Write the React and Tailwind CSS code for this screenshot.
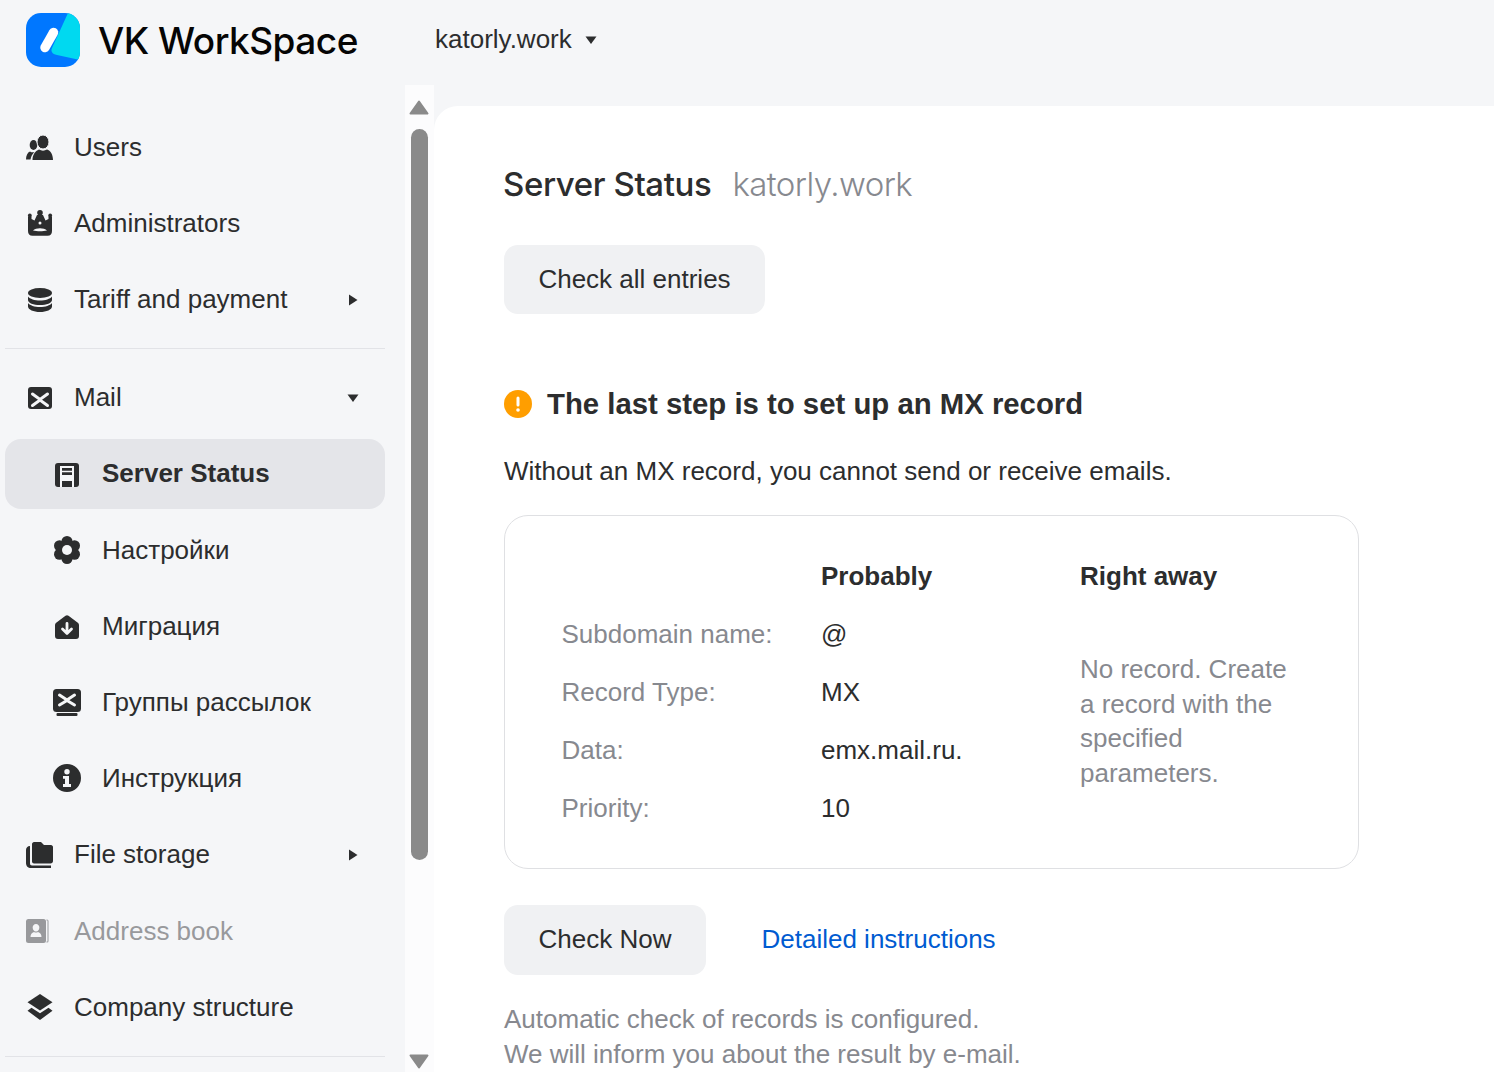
import React from "react";

const BG = "#f5f6f8";

const Icon = ({ children }) => (
  <svg width="28" height="28" viewBox="0 0 28 28" fill="currentColor" className="shrink-0">
    {children}
  </svg>
);

const icons = {
  users: (
    <Icon>
      <ellipse cx="7.500" cy="12" rx="3.800" ry="5" />
      <path d="M0 26.500c0-4 1.500-7 4-8 1.500 1 3 1 4.500.5-2 1.800-3.500 4.500-4 7.500z" />
      <ellipse cx="17" cy="9" rx="6" ry="7" stroke={BG} strokeWidth="1" />
      <path d="M6.500 27c0-5 2.500-9 6.500-10.500 2.500 1.500 5.500 1.500 8 0 3.500 1 6 5 6 10.500z" />
    </Icon>
  ),
  crown: (
    <Icon>
      <path
        fillRule="evenodd"
        d="M2 7.500h3.500V10l3 1.500L11 6h6l2.500 5.500 3-1.500V7.500H26V22c0 3-1.500 4.700-4.500 4.700h-15C3.500 26.700 2 25 2 22zM7 21.500c4 1 10 1 14 0-3-3-11-3-14 0zM14 12.500a1.500 1.500 0 1 0 0 3 1.500 1.500 0 0 0 0-3z"
      />
      <circle cx="14" cy="3.800" r="2.800" />
      <circle cx="3.800" cy="6.500" r="1.900" />
      <circle cx="24.200" cy="6.500" r="1.900" />
    </Icon>
  ),
  database: (
    <Icon>
      <ellipse cx="14" cy="8" rx="12" ry="5" />
      <path d="M2 11.500c2 2.500 6.500 4 12 4s10-1.500 12-4v3.500c0 3-5.500 5-12 5s-12-2-12-5z" />
      <path d="M2 18c2 2.500 6.500 4 12 4s10-1.500 12-4v3.500c0 3-5.500 5.500-12 5.500s-12-2.500-12-5.500z" />
    </Icon>
  ),
  mail: (
    <Icon>
      <rect x="2" y="4" width="24" height="22" rx="3" />
      <path
        d="M6.500 11 14 16.500 21.500 11M6.500 22.500 14 17l7.500 5.500"
        fill="none"
        stroke={BG}
        strokeWidth="3"
        strokeLinecap="round"
      />
    </Icon>
  ),
  server: (
    <Icon>
      <rect x="2" y="3" width="24" height="24" rx="3" />
      <path
        fillRule="evenodd"
        fill={BG}
        d="M7 6h14v21h-2v-6H9v6H7zM9 8v2.700h10V8zM9 12.300v2.700h10v-2.700z"
      />
    </Icon>
  ),
  gear: (
    <Icon>
      <circle cx="14" cy="5.500" r="5.500" />
      <circle cx="14" cy="22.500" r="5.500" />
      <circle cx="6.500" cy="9.750" r="5.500" />
      <circle cx="21.500" cy="9.750" r="5.500" />
      <circle cx="6.500" cy="18.250" r="5.500" />
      <circle cx="21.500" cy="18.250" r="5.500" />
      <circle cx="14" cy="14" r="9" />
      <circle cx="14" cy="14" r="5" fill={BG} />
    </Icon>
  ),
  migrate: (
    <Icon>
      <path d="M12.500 3.800c1-.8 2-.8 3 0l9 6.700c1 .8 1.500 1.500 1.500 2.800V24c0 2-1 3-3 3H5c-2 0-3-1-3-3V13.300c0-1.300.5-2 1.500-2.800z" />
      <path
        d="M14 11.500V21M9.500 17l4.500 4.500 4.500-4.500"
        fill="none"
        stroke={BG}
        strokeWidth="2.800"
        strokeLinecap="round"
        strokeLinejoin="round"
      />
    </Icon>
  ),
  groups: (
    <Icon>
      <rect x="0" y="1" width="28" height="23" rx="3.500" />
      <path
        d="M6.500 7 14 12l7.500-5M6.500 17 14 12.500l7.500 4.500"
        fill="none"
        stroke={BG}
        strokeWidth="3"
        strokeLinecap="round"
      />
      <rect x="3.500" y="25" width="21" height="3" rx="1" />
    </Icon>
  ),
  info: (
    <Icon>
      <path
        fillRule="evenodd"
        d="M14 0a14 14 0 1 1 0 28 14 14 0 0 1 0-28zm0 5a2.700 2.700 0 1 0 0 5.400A2.700 2.700 0 0 0 14 5zm-4 7v2.800h2v5.200h-2V23h8v-3h-2v-8z"
      />
    </Icon>
  ),
  file: (
    <Icon>
      <path d="M8 1h7l3 3h7c1 0 2 1 2 2v14c0 1.500-1 2.500-2.500 2.500H8c-1 0-2-1-2-2V3c0-1 1-2 2-2z" />
      <path d="M4 5v17.500c0 1 .7 2 2 2h19V27H5c-3 0-5-2-5-5V9c0-2 1.500-4 4-4z" />
    </Icon>
  ),
  book: (
    <Icon>
      <path
        fillRule="evenodd"
        d="M2 2h15.500A2.500 2.500 0 0 1 20 4.500v19a2.500 2.500 0 0 1-2.500 2.500H2.500A2.500 2.500 0 0 1 0 23.500V4.500A2.500 2.500 0 0 1 2 2zm8 5a3.300 3.300 0 0 0-3.300 3.800c0 2 1.300 3.700 3.300 3.700s3.300-1.700 3.300-3.700A3.300 3.300 0 0 0 10 7zM4.500 20h11c0-2.500-1.300-4.300-3.500-5-1.300.7-2.700.7-4 0-2.200.7-3.500 2.500-3.500 5z"
      />
      <path d="M20.500 2.500h.5a1.500 1.500 0 0 1 1.500 1.500v20a1.500 1.500 0 0 1-1.500 1.500h-.5v-1h1v-21h-1z" />
    </Icon>
  ),
  layers: (
    <Icon>
      <path d="M14 1 26.500 9.300 14 17.500 1.500 9.300z" />
      <path d="M5.500 14.800 14 20.300l8.500-5.500 4 3L14 27 1.500 17.800z" />
    </Icon>
  ),
};

const Caret = ({ dir }) => (
  <svg width="12" height="12" viewBox="0 0 12 12" fill="currentColor" className="ml-auto mt-px shrink-0">
    {dir === "down" ? <path d="M0.500 2.500h11L6 10z" /> : <path d="M2 0.500v11L10.500 6z" />}
  </svg>
);

const NavItem = ({ icon, label, caret, sub, active, muted, tall }) => {
  const content = (
    <div className={`flex items-center ${sub ? "gap-[21px]" : "gap-[20px]"}`}>
      {icons[icon]}
      <span className={active ? "font-bold" : ""}>{label}</span>
    </div>
  );
  return (
    <div
      className={`flex items-center ${tall ? "h-[77px]" : "h-[76px]"} ${muted ? "text-[#98999c]" : "text-[#2c2d2e]"} ${
        active ? "" : `pr-[26px] ${sub ? "pl-[48px]" : "pl-[21px]"}`
      }`}
    >
      {active ? (
        <div className="flex h-[70px] w-full items-center rounded-[16px] bg-[#e4e5e9] pl-[48px] pr-[26px]">{content}</div>
      ) : (
        <>
          {content}
          {caret && <Caret dir={caret} />}
        </>
      )}
    </div>
  );
};

const Logo = () => (
  <svg width="54" height="54" viewBox="0 0 54 54" className="shrink-0">
    <defs>
      <clipPath id="logo-clip">
        <rect width="54" height="54" rx="15" />
      </clipPath>
    </defs>
    <g clipPath="url(#logo-clip)">
      <rect width="54" height="54" fill="#0077ff" />
      <path d="M42 0h12v47l-23-5c-5-1-6.500-4-5-7z" fill="#00d9f0" />
      <path d="M27.500 19.500 19 34.500" stroke="#ffffff" strokeWidth="9.500" strokeLinecap="round" />
    </g>
  </svg>
);

const recordRows = [
  ["Subdomain name:", "@"],
  ["Record Type:", "MX"],
  ["Data:", "emx.mail.ru."],
  ["Priority:", "10"],
];

export default function App() {
  return (
    <div className="h-[1072px] overflow-hidden bg-[#f5f6f8] text-[26px] font-['Liberation_Sans',Arial,sans-serif] text-[#2c2d2e]">
      <header className="flex h-[85px] items-start">
        <div className="flex w-[435px] items-start gap-[18px] pl-[26px] pt-[13px]">
          <Logo />
          <span className="pt-[1px] font-['Inter',sans-serif] text-[37px] font-medium leading-[54px] tracking-[-0.5px] text-[#050505]">
            VK WorkSpace
          </span>
        </div>
        <div className="flex items-center gap-[13px] pt-[20px]">
          <span>katorly.work</span>
          <svg width="12" height="8" viewBox="0 0 12 8" fill="currentColor">
            <path d="M0.500 0.500h11L6 8z" />
          </svg>
        </div>
      </header>

      <div className="flex h-[987px]">
        <aside className="w-[405px] shrink-0 pl-[5px] pt-[24px]">
          <nav className="w-[380px]">
            <NavItem icon="users" label="Users" />
            <NavItem icon="crown" label="Administrators" />
            <NavItem icon="database" label="Tariff and payment" caret="right" />
            <div className="mb-[10px] mt-[11px] h-px bg-[#e2e3e7]" />
            <NavItem icon="mail" label="Mail" caret="down" />
            <NavItem icon="server" label="Server Status" sub active tall />
            <NavItem icon="gear" label="Настройки" sub />
            <NavItem icon="migrate" label="Миграция" sub />
            <NavItem icon="groups" label="Группы рассылок" sub />
            <NavItem icon="info" label="Инструкция" sub />
            <NavItem icon="file" label="File storage" caret="right" tall />
            <NavItem icon="book" label="Address book" muted />
            <NavItem icon="layers" label="Company structure" />
            <div className="mt-[11px] h-px bg-[#e2e3e7]" />
          </nav>
        </aside>

        {/* scrollbar */}
        <div className="flex w-[29px] shrink-0 flex-col items-center bg-[#fcfcfd] pr-[1px] pt-[15px]">
          <svg width="20" height="15" viewBox="0 0 20 15" fill="#8a8a8a">
            <path d="M10 1.500 18.500 13.500H1.500z" stroke="#8a8a8a" strokeWidth="2" strokeLinejoin="round" />
          </svg>
          <div className="mt-[14px] h-[731px] w-[17px] rounded-[9px] bg-[#8a8a8a]" />
          <svg className="mt-[194px]" width="20" height="15" viewBox="0 0 20 15" fill="#8a8a8a">
            <path d="M10 13.500 18.500 1.500H1.500z" stroke="#8a8a8a" strokeWidth="2" strokeLinejoin="round" />
          </svg>
        </div>

        <main className="mt-[21px] flex-1 rounded-tl-[24px] bg-white pl-[70px] pt-[57px]">
          <div className="-ml-px flex items-baseline gap-[21px] font-['Inter',sans-serif] text-[33px] leading-[42px]">
            <h1 className="font-medium tracking-[-0.4px]">Server Status</h1>
            <span className="font-light tracking-[-0.55px] text-[#87898f]">katorly.work</span>
          </div>

          <button className="mt-[40px] flex h-[69px] w-[261px] items-center justify-center rounded-[14px] bg-[#f0f1f3]">
            Check all entries
          </button>

          <div className="mt-[71px] flex items-center gap-[15px]">
            <svg width="28" height="28" viewBox="0 0 28 28">
              <circle cx="14" cy="14" r="14" fill="#ff9e00" />
              <rect x="12.500" y="6.500" width="3" height="10" rx="1.500" fill="#fff" />
              <circle cx="14" cy="20" r="1.800" fill="#fff" />
            </svg>
            <h2 className="text-[29.33px] font-bold leading-[38px]">The last step is to set up an MX record</h2>
          </div>

          <p className="mt-[30px] leading-[36px]">Without an MX record, you cannot send or receive emails.</p>

          <div className="mt-[26px] h-[354px] w-[855px] rounded-[24px] border border-[#dfe0e3] pl-[56.5px] pt-[31px]">
            <div className="grid grid-cols-[259.5px_259px_1fr] auto-rows-[58px] items-center">
              <div />
              <div className="font-bold">Probably</div>
              <div className="font-bold">Right away</div>
              {recordRows.map(([name, value], i) => (
                <React.Fragment key={name}>
                  <div className="text-[#87898f]">{name}</div>
                  <div>{value}</div>
                  {i === 0 && (
                    <div className="row-span-4 self-start pt-[47px] leading-[34.7px] text-[#87898f]">
                      No record. Create
                      <br />
                      a record with the
                      <br />
                      specified
                      <br />
                      parameters.
                    </div>
                  )}
                </React.Fragment>
              ))}
            </div>
          </div>

          <div className="mt-[36px] flex items-center gap-[55.5px]">
            <button className="flex h-[70px] w-[202px] items-center justify-center rounded-[14px] bg-[#f0f1f3] pb-[2px]">
              Check Now
            </button>
            <a className="pb-[2px] text-[#005bd1]">Detailed instructions</a>
          </div>

          <p className="mt-[27px] leading-[35px] text-[#87898f]">
            Automatic check of records is configured.
            <br />
            We will inform you about the result by e-mail.
          </p>
        </main>
      </div>
    </div>
  );
}
